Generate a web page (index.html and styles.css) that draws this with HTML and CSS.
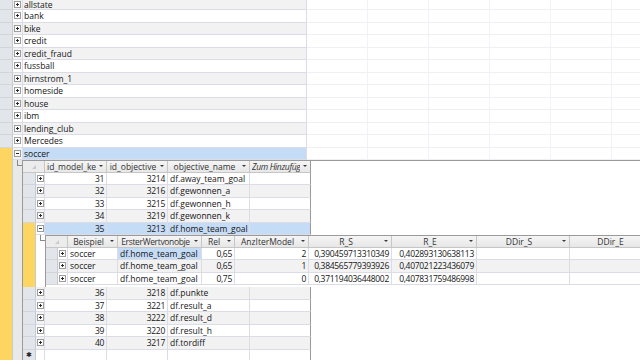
FILE: index.html
```html
<!DOCTYPE html>
<html>
<head>
<meta charset="utf-8">
<link rel="stylesheet" href="styles.css">
</head>
<body>
<div class="sheet">
  <div class="row alt first"><div class="sel"></div><div class="exp e0"><i class="pm"></i></div><div class="cell name">allstate</div><div class="fill"></div></div>
  <div class="row"><div class="sel"></div><div class="exp e0"><i class="pm"></i></div><div class="cell name">bank</div><div class="fill"></div></div>
  <div class="row alt"><div class="sel"></div><div class="exp e0"><i class="pm"></i></div><div class="cell name">bike</div><div class="fill"></div></div>
  <div class="row"><div class="sel"></div><div class="exp e0"><i class="pm"></i></div><div class="cell name">credit</div><div class="fill"></div></div>
  <div class="row alt"><div class="sel"></div><div class="exp e0"><i class="pm"></i></div><div class="cell name">credit_fraud</div><div class="fill"></div></div>
  <div class="row"><div class="sel"></div><div class="exp e0"><i class="pm"></i></div><div class="cell name">fussball</div><div class="fill"></div></div>
  <div class="row alt"><div class="sel"></div><div class="exp e0"><i class="pm"></i></div><div class="cell name">hirnstrom_1</div><div class="fill"></div></div>
  <div class="row"><div class="sel"></div><div class="exp e0"><i class="pm"></i></div><div class="cell name">homeside</div><div class="fill"></div></div>
  <div class="row alt"><div class="sel"></div><div class="exp e0"><i class="pm"></i></div><div class="cell name">house</div><div class="fill"></div></div>
  <div class="row"><div class="sel"></div><div class="exp e0"><i class="pm"></i></div><div class="cell name">ibm</div><div class="fill"></div></div>
  <div class="row alt"><div class="sel"></div><div class="exp e0"><i class="pm"></i></div><div class="cell name">lending_club</div><div class="fill"></div></div>
  <div class="row"><div class="sel"></div><div class="exp e0"><i class="pm"></i></div><div class="cell name">Mercedes</div><div class="fill"></div></div>

  <div class="group">
    <div class="sel yel"></div>
    <div class="gbody">
      <div class="row alt"><div class="exp e0"><i class="pm minus"></i></div><div class="cell name cur">soccer</div><div class="fill"></div></div>
      <div class="nest">
        <div class="gutter gray"><i class="tree"></i></div>
        <div class="sub">
          <div class="hrow">
            <div class="corner k1"><i class="tri"></i></div>
            <div class="hcell c-mk"><span>id_model_ke</span><i class="dd"></i></div>
            <div class="hcell c-obj"><span>id_objective</span><i class="dd"></i></div>
            <div class="hcell c-on"><span>objective_name</span><i class="dd"></i></div>
            <div class="hcell c-zum last"><span class="it tight">Zum Hinzufüg</span><i class="dd"></i></div>
            <div class="hfill"></div>
          </div>
          <div class="row"><div class="sel"></div><div class="exp e1"><i class="pm"></i></div><div class="cell num c-mk">31</div><div class="cell num c-obj">3214</div><div class="cell c-on">df.away_team_goal</div><div class="cell c-zum last"></div><div class="fill1"></div></div>
          <div class="row alt"><div class="sel"></div><div class="exp e1"><i class="pm"></i></div><div class="cell num c-mk">32</div><div class="cell num c-obj">3216</div><div class="cell c-on">df.gewonnen_a</div><div class="cell c-zum last"></div><div class="fill1"></div></div>
          <div class="row"><div class="sel"></div><div class="exp e1"><i class="pm"></i></div><div class="cell num c-mk">33</div><div class="cell num c-obj">3215</div><div class="cell c-on">df.gewonnen_h</div><div class="cell c-zum last"></div><div class="fill1"></div></div>
          <div class="row alt"><div class="sel"></div><div class="exp e1"><i class="pm"></i></div><div class="cell num c-mk">34</div><div class="cell num c-obj">3219</div><div class="cell c-on">df.gewonnen_k</div><div class="cell c-zum last"></div><div class="fill1"></div></div>

          <div class="group">
            <div class="sel yel"></div>
            <div class="gbody">
              <div class="row"><div class="exp e1"><i class="pm minus"></i></div><div class="cell num c-mk cur">35</div><div class="cell num c-obj cur">3213</div><div class="cell c-on cur">df.home_team_goal</div><div class="cell c-zum last cur"></div><div class="fill1"></div></div>
              <div class="nest">
                <div class="gutter"><i class="tree"></i></div>
                <div class="sub sub2">
                  <div class="hrow">
                    <div class="corner k2"><i class="tri"></i></div>
                    <div class="hcell c-bsp"><span>Beispiel</span><i class="dd"></i></div>
                    <div class="hcell c-ew"><span class="tight">ErsterWertvonobje</span><i class="dd"></i></div>
                    <div class="hcell c-rel"><span>Rel</span><i class="dd"></i></div>
                    <div class="hcell c-anz"><span>AnzIterModel</span><i class="dd"></i></div>
                    <div class="hcell c-rs"><span>R_S</span><i class="dd"></i></div>
                    <div class="hcell c-re"><span>R_E</span><i class="dd"></i></div>
                    <div class="hcell c-ds"><span>DDir_S</span><i class="dd"></i></div>
                    <div class="hcell c-de"><span>DDir_E</span><i class="dd"></i></div>
                  </div>
                  <div class="row"><div class="sel s2"></div><div class="exp e2"><i class="pm"></i></div><div class="cell c-bsp">soccer</div><div class="cell c-ew cur">df.home_team_goal</div><div class="cell num c-rel">0,65</div><div class="cell num c-anz">2</div><div class="cell num c-rs">0,390459713310349</div><div class="cell num c-re">0,402893130638113</div><div class="cell c-ds"></div><div class="cell c-de"></div></div>
                  <div class="row alt"><div class="sel s2"></div><div class="exp e2"><i class="pm"></i></div><div class="cell c-bsp">soccer</div><div class="cell c-ew">df.home_team_goal</div><div class="cell num c-rel">0,65</div><div class="cell num c-anz">1</div><div class="cell num c-rs">0,384565779393926</div><div class="cell num c-re">0,407021223436079</div><div class="cell c-ds"></div><div class="cell c-de"></div></div>
                  <div class="row"><div class="sel s2"></div><div class="exp e2"><i class="pm"></i></div><div class="cell c-bsp">soccer</div><div class="cell c-ew">df.home_team_goal</div><div class="cell num c-rel">0,75</div><div class="cell num c-anz">0</div><div class="cell num c-rs">0,371194036448002</div><div class="cell num c-re">0,407831759486998</div><div class="cell c-ds"></div><div class="cell c-de"></div></div>
                </div>
              </div>
            </div>
          </div>

          <div class="row alt"><div class="sel"></div><div class="exp e1"><i class="pm"></i></div><div class="cell num c-mk">36</div><div class="cell num c-obj">3218</div><div class="cell c-on">df.punkte</div><div class="cell c-zum last"></div><div class="fill1"></div></div>
          <div class="row"><div class="sel"></div><div class="exp e1"><i class="pm"></i></div><div class="cell num c-mk">37</div><div class="cell num c-obj">3221</div><div class="cell c-on">df.result_a</div><div class="cell c-zum last"></div><div class="fill1"></div></div>
          <div class="row alt"><div class="sel"></div><div class="exp e1"><i class="pm"></i></div><div class="cell num c-mk">38</div><div class="cell num c-obj">3222</div><div class="cell c-on">df.result_d</div><div class="cell c-zum last"></div><div class="fill1"></div></div>
          <div class="row"><div class="sel"></div><div class="exp e1"><i class="pm"></i></div><div class="cell num c-mk">39</div><div class="cell num c-obj">3220</div><div class="cell c-on">df.result_h</div><div class="cell c-zum last"></div><div class="fill1"></div></div>
          <div class="row alt"><div class="sel"></div><div class="exp e1"><i class="pm"></i></div><div class="cell num c-mk">40</div><div class="cell num c-obj">3217</div><div class="cell c-on">df.tordiff</div><div class="cell c-zum last"></div><div class="fill1"></div></div>
          <div class="row"><div class="sel newrow">✱</div><div class="exp e1"></div><div class="cell num c-mk"></div><div class="cell num c-obj"></div><div class="cell c-on"></div><div class="cell c-zum last"></div><div class="fill1"></div></div>
        </div>
      </div>
    </div>
  </div>
</div>
</body>
</html>
```

FILE: styles.css
```css
* { box-sizing: border-box; margin: 0; padding: 0; }
html, body { background: #fff; }
body {
  width: 640px;
  height: 360px;
  overflow: hidden;
  font-family: "Open Sans", "Segoe UI", sans-serif;
  font-size: 8.5px;
  color: #151515;
}

.row, .hrow { display: flex; height: 12.5px; flex: none; }
.row.first { height: 10px; }
.sub > .hrow { height: 11.5px; }

.sel {
  flex: none;
  width: 13px;
  background: #e2e5ea;
  border-right: 1px solid #c7cbd1;
  border-bottom: 1px solid #d2d5da;
}
.sel.s2 { width: 12px; }
.sel.yel { background: #fcd660; border-bottom: none; }
.sel.newrow {
  display: flex;
  align-items: center;
  justify-content: center;
  font-family: "DejaVu Sans", sans-serif;
  font-size: 7px;
  color: #222;
}

.exp {
  flex: none;
  display: flex;
  align-items: center;
  justify-content: center;
  background: #fff;
  border-right: 1px solid #dcdce6;
  border-bottom: 1px solid #dcdce6;
}
.e0 { width: 10px; }
.e1 { width: 9px; }
.e2 { width: 10px; }

.pm {
  display: block;
  width: 7px;
  height: 7px;
  border: 1px solid #9d9d9d;
  background:
    linear-gradient(#2a2a2a, #2a2a2a) center / 3px 1px no-repeat,
    linear-gradient(#2a2a2a, #2a2a2a) center / 1px 3px no-repeat,
    #fdfdfd;
}
.pm.minus {
  background:
    linear-gradient(#2a2a2a, #2a2a2a) center / 3px 1px no-repeat,
    #fdfdfd;
}

.cell {
  flex: none;
  display: flex;
  align-items: center;
  padding: 0 2px;
  background: #fff;
  border-right: 1px solid #dcdce6;
  border-bottom: 1px solid #dcdce6;
  white-space: nowrap;
  overflow: hidden;
}
.alt > .cell, .alt > .exp { background: #f2f2f2; }
.num { justify-content: flex-end; letter-spacing: -0.3px; }
.cell.cur, .alt > .cell.cur { background: #c5dcf6; }

.name { width: 284px; padding-left: 1px; }

.fill {
  flex: 1;
  border-bottom: 1px solid #f0f0f4;
  background: repeating-linear-gradient(to right, #fff 0 60px, #f2f2f6 60px 61px);
}
.fill1 { flex: 1; background: #fff; }

.group { display: flex; }
.gbody { flex: 1; min-width: 0; display: flex; flex-direction: column; }

.nest { display: flex; }
.gutter { flex: none; width: 9px; background: #fff; }
.gutter.gray { background: #e9e9ea; }
.tree {
  display: block;
  width: 5px;
  height: 6px;
  margin-left: 4px;
  border-left: 1px solid #8a8a8a;
  border-bottom: 1px solid #8a8a8a;
}

.sub {
  flex: 1;
  min-width: 0;
  overflow: hidden;
  border-left: 1px solid #9a9a9a;
  border-top: 1px solid #9a9a9a;
}
.sub2 { padding-bottom: 2.2px; background: #fff; }

.corner {
  flex: none;
  display: flex;
  align-items: flex-end;
  justify-content: center;
  padding-bottom: 3px;
  background: #ececec;
  border-right: 1px solid #c6c6c6;
  border-bottom: 1px solid #c6c6c6;
}
.k1 { width: 22px; }
.k2 { width: 22px; }
.tri {
  display: block;
  width: 0;
  height: 0;
  border-left: 4px solid transparent;
  border-bottom: 4px solid #c9c9c9;
}

.hcell {
  flex: none;
  display: flex;
  align-items: center;
  padding: 0 3px 0 2px;
  background: linear-gradient(#f5f5f5, #e7e7e7);
  border-right: 1px solid #c6c6c6;
  border-bottom: 1px solid #c6c6c6;
  color: #333;
  white-space: nowrap;
  overflow: hidden;
}
.hcell span { flex: 1; min-width: 0; overflow: hidden; text-align: center; }
.hcell .it { font-style: italic; text-align: left; }
.hcell .tight { letter-spacing: -0.35px; }
.dd {
  flex: none;
  display: block;
  width: 0;
  height: 0;
  margin-left: 3px;
  border-left: 2px solid transparent;
  border-right: 2px solid transparent;
  border-top: 2px solid #3a3a3a;
}
.hfill { flex: 1; background: #fff; }

.last { border-right-color: #9a9a9a; }

.c-mk { width: 62px; }
.c-obj { width: 61px; }
.c-on { width: 82px; }
.c-zum { width: 61px; }

.c-bsp { width: 50px; }
.c-ew { width: 84px; }
.c-rel { width: 33px; }
.c-anz { width: 74px; }
.c-rs { width: 83px; }
.c-re { width: 85px; }
.c-ds { width: 93px; }
.c-de { width: 90px; }
```
